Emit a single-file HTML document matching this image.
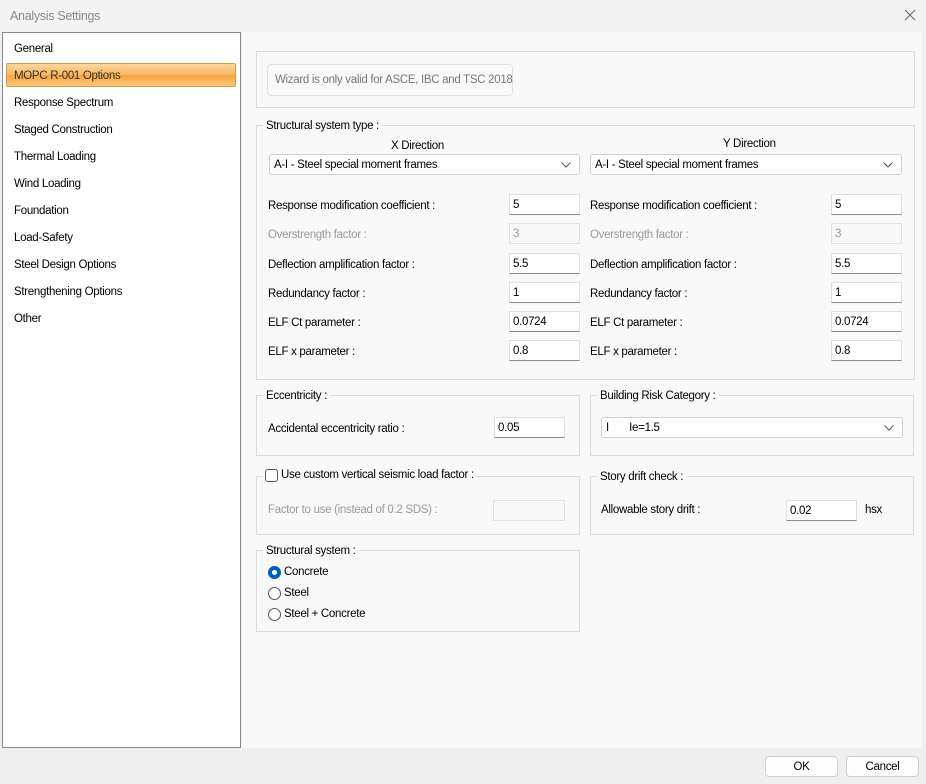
<!DOCTYPE html>
<html><head><meta charset="utf-8"><style>
*{box-sizing:border-box;margin:0;padding:0}
body{width:926px;height:784px;background:#efefef;font-family:"Liberation Sans",sans-serif;font-size:11.5px;letter-spacing:-0.3px;line-height:17px;color:#000;position:relative;overflow:hidden}
.a{position:absolute;white-space:nowrap}
.grp{position:absolute;border:1px solid #dcdcdc}
.lg{position:absolute;background:#f9f9f9;padding:0 3px;top:-8px;left:6px;line-height:16px}
.inp{position:absolute;background:#fff;border:1px solid #e0e0e0;border-bottom:1px solid #8a8a8a;height:21px;padding:2px 3px;line-height:17px}
.dis{background:#f9f9f9;border:1px solid #e3e3e3;color:#999}
.cb{position:absolute;background:#fff;border:1px solid #cfcfcf;border-radius:3px;height:21px;padding:2px 4px;line-height:17px}
.cb svg{position:absolute;right:8px;top:7px}
.g{color:#9a9a9a}
.li{position:absolute;left:14px}
.rad{position:absolute;width:13px;height:13px;border-radius:50%;border:1px solid #555;background:#fff}
.btn{position:absolute;background:#fdfdfd;border:1px solid #d0d0d0;border-radius:4px;height:21px;text-align:center;line-height:20px}
</style></head><body>
<div class="a" style="left:0;top:0;width:926px;height:32px;background:#f3f3f3"></div>
<div class="a" style="left:10px;top:8px;color:#8a8a8a;font-size:12.5px">Analysis Settings</div>
<svg class="a" style="left:904px;top:9px" width="12" height="12"><path d="M1 1L11 11M11 1L1 11" stroke="#666" stroke-width="1"/></svg>

<div class="a" style="left:2px;top:32px;width:239px;height:716px;background:#fff;border:1px solid #8a8a8a"></div>
<div class="a" style="left:6px;top:63px;width:230px;height:24px;border:1px solid #d79a45;border-radius:2px;background:linear-gradient(#fcd7a0,#f9b660 50%,#f7a43c 51%,#fbc67e)"></div>
<div class="li a" style="top:41px">General</div>
<div class="li a" style="top:68px;color:#333">MOPC R-001 Options</div>
<div class="li a" style="top:95px">Response Spectrum</div>
<div class="li a" style="top:122px">Staged Construction</div>
<div class="li a" style="top:149px">Thermal Loading</div>
<div class="li a" style="top:176px">Wind Loading</div>
<div class="li a" style="top:203px">Foundation</div>
<div class="li a" style="top:230px">Load-Safety</div>
<div class="li a" style="top:257px">Steel Design Options</div>
<div class="li a" style="top:284px">Strengthening Options</div>
<div class="li a" style="top:311px">Other</div>

<div class="a" style="left:242px;top:32px;width:680px;height:716px;background:#f9f9f9"></div>

<div class="grp" style="left:256px;top:51px;width:659px;height:57px"></div>
<div class="a" style="left:267px;top:64px;width:246px;height:32px;border:1px solid #e2e2e2;border-radius:4px;background:#f9f9f9;color:#777;padding:7px 7px;line-height:17px">Wizard is only valid for ASCE, IBC and TSC 2018</div>

<div class="grp" style="left:256px;top:125px;width:659px;height:255px"><div class="lg">Structural system type :</div></div>
<div class="a" style="left:391px;top:138px">X Direction</div>
<div class="a" style="left:723px;top:136px">Y Direction</div>
<div class="cb" style="left:269px;top:154px;width:311px">A-I - Steel special moment frames<svg width="10" height="6"><path d="M0.5 0.5L5 5L9.5 0.5" stroke="#555" fill="none"/></svg></div>
<div class="cb" style="left:590px;top:154px;width:312px">A-I - Steel special moment frames<svg width="10" height="6"><path d="M0.5 0.5L5 5L9.5 0.5" stroke="#555" fill="none"/></svg></div>

<div class="a" style="left:268px;top:198px">Response modification coefficient :</div>
<div class="a g" style="left:268px;top:227px">Overstrength factor :</div>
<div class="a" style="left:268px;top:257px">Deflection amplification factor :</div>
<div class="a" style="left:268px;top:286px">Redundancy factor :</div>
<div class="a" style="left:268px;top:315px">ELF Ct parameter :</div>
<div class="a" style="left:268px;top:344px">ELF x parameter :</div>
<div class="inp" style="left:509px;top:194px;width:71px">5</div>
<div class="inp dis" style="left:509px;top:223px;width:71px">3</div>
<div class="inp" style="left:509px;top:253px;width:71px">5.5</div>
<div class="inp" style="left:509px;top:282px;width:71px">1</div>
<div class="inp" style="left:509px;top:311px;width:71px">0.0724</div>
<div class="inp" style="left:509px;top:340px;width:71px">0.8</div>

<div class="a" style="left:590px;top:198px">Response modification coefficient :</div>
<div class="a g" style="left:590px;top:227px">Overstrength factor :</div>
<div class="a" style="left:590px;top:257px">Deflection amplification factor :</div>
<div class="a" style="left:590px;top:286px">Redundancy factor :</div>
<div class="a" style="left:590px;top:315px">ELF Ct parameter :</div>
<div class="a" style="left:590px;top:344px">ELF x parameter :</div>
<div class="inp" style="left:831px;top:194px;width:71px">5</div>
<div class="inp dis" style="left:831px;top:223px;width:71px">3</div>
<div class="inp" style="left:831px;top:253px;width:71px">5.5</div>
<div class="inp" style="left:831px;top:282px;width:71px">1</div>
<div class="inp" style="left:831px;top:311px;width:71px">0.0724</div>
<div class="inp" style="left:831px;top:340px;width:71px">0.8</div>

<div class="grp" style="left:256px;top:395px;width:324px;height:61px"><div class="lg">Eccentricity :</div></div>
<div class="a" style="left:268px;top:421px">Accidental eccentricity ratio :</div>
<div class="inp" style="left:494px;top:417px;width:71px">0.05</div>

<div class="grp" style="left:590px;top:395px;width:324px;height:61px"><div class="lg">Building Risk Category :</div></div>
<div class="cb" style="left:601px;top:417px;width:302px">I&nbsp;&nbsp;&nbsp;&nbsp;&nbsp;&nbsp;&nbsp;Ie=1.5<svg width="10" height="6"><path d="M0.5 0.5L5 5L9.5 0.5" stroke="#555" fill="none"/></svg></div>

<div class="grp" style="left:256px;top:476px;width:324px;height:59px"></div>
<div class="a" style="left:263px;top:468px;background:#f9f9f9;height:14px;width:212px"></div>
<div class="a" style="left:265px;top:469px;width:13px;height:13px;border:1px solid #555;border-radius:3px;background:#fff"></div>
<div class="a" style="left:281px;top:467px">Use custom vertical seismic load factor :</div>
<div class="a g" style="left:268px;top:502px">Factor to use (instead of 0.2 SDS) :</div>
<div class="inp dis" style="left:493px;top:500px;width:72px"></div>

<div class="grp" style="left:590px;top:476px;width:324px;height:59px"><div class="lg">Story drift check :</div></div>
<div class="a" style="left:601px;top:502px">Allowable story drift :</div>
<div class="inp" style="left:786px;top:500px;width:71px">0.02</div>
<div class="a" style="left:865px;top:502px">hsx</div>

<div class="grp" style="left:256px;top:550px;width:324px;height:82px"><div class="lg">Structural system :</div></div>
<div class="rad" style="left:268px;top:566px;border:4px solid #005fb8"></div>
<div class="a" style="left:284px;top:564px">Concrete</div>
<div class="rad" style="left:268px;top:587px"></div>
<div class="a" style="left:284px;top:585px">Steel</div>
<div class="rad" style="left:268px;top:608px"></div>
<div class="a" style="left:284px;top:606px">Steel + Concrete</div>

<div class="btn" style="left:765px;top:756px;width:73px">OK</div>
<div class="btn" style="left:846px;top:756px;width:73px">Cancel</div>
</body></html>
